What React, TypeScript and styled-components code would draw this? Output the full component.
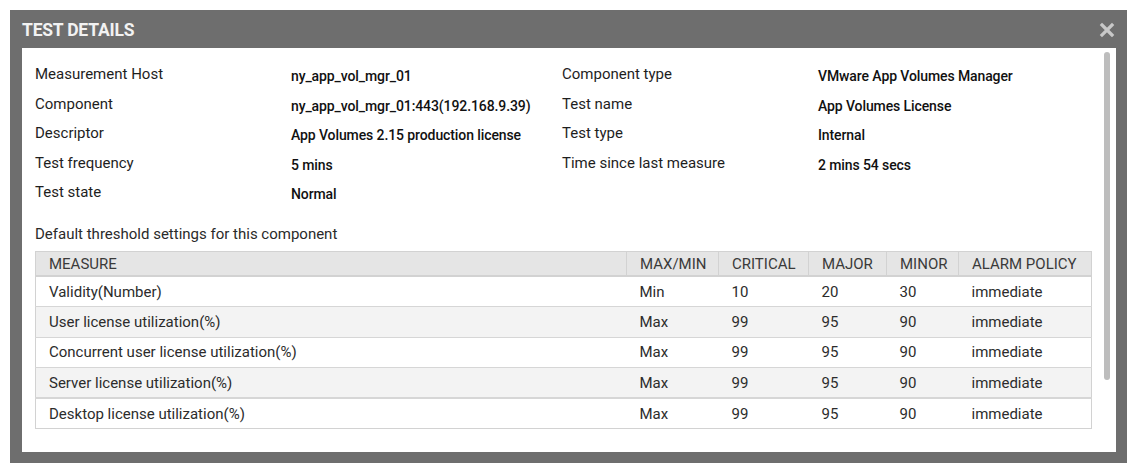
import styled, { createGlobalStyle } from 'styled-components';

const GlobalStyle = createGlobalStyle`
	body {
		margin: 0;
		background: #ffffff;
		font-family: Roboto, 'Liberation Sans', sans-serif;
	}
`;

const details = [
	['Measurement Host', 'ny_app_vol_mgr_01', 'Component type', 'VMware App Volumes Manager'],
	['Component', 'ny_app_vol_mgr_01:443(192.168.9.39)', 'Test name', 'App Volumes License'],
	['Descriptor', 'App Volumes 2.15 production license', 'Test type', 'Internal'],
	['Test frequency', '5 mins', 'Time since last measure', '2 mins 54 secs'],
	['Test state', 'Normal', '', ''],
];

const columns = [
	{ title: 'MEASURE', width: 591 },
	{ title: 'MAX/MIN', width: 92 },
	{ title: 'CRITICAL', width: 90 },
	{ title: 'MAJOR', width: 78 },
	{ title: 'MINOR', width: 72 },
	{ title: 'ALARM POLICY', width: 133 },
];

const rows = [
	['Validity(Number)', 'Min', '10', '20', '30', 'immediate'],
	['User license utilization(%)', 'Max', '99', '95', '90', 'immediate'],
	['Concurrent user license utilization(%)', 'Max', '99', '95', '90', 'immediate'],
	['Server license utilization(%)', 'Max', '99', '95', '90', 'immediate'],
	['Desktop license utilization(%)', 'Max', '99', '95', '90', 'immediate'],
];

function App() {
	return (
		<>
			<GlobalStyle />
			<Dialog>
				<Header>
					<h1>TEST DETAILS</h1>
					<CloseIcon width="16" height="16" viewBox="0 0 16 16">
						<path d="M3 3 L13 13 M13 3 L3 13" stroke="#c8c8c8" strokeWidth="3.2" strokeLinecap="square" />
					</CloseIcon>
				</Header>
				<Panel>
					<Content>
						<InfoGrid>
							{details.map((row, idx) => (
								<InfoRow key={idx}>
									<Label>{row[0]}</Label>
									<Value>{row[1]}</Value>
									<Label>{row[2]}</Label>
									<Value>{row[3]}</Value>
								</InfoRow>
							))}
						</InfoGrid>
						<Caption>Default threshold settings for this component</Caption>
						<Table>
							<thead>
								<tr>
									{columns.map((col) => (
										<Th key={col.title} style={{ width: col.width }}>
											{col.title}
										</Th>
									))}
								</tr>
							</thead>
							<tbody>
								{rows.map((row, idx) => (
									<Tr key={idx} $odd={idx % 2 === 1} $thick={idx === 4}>
										{row.map((cell, cIdx) => (
											<Td key={cIdx}>{cell}</Td>
										))}
									</Tr>
								))}
							</tbody>
						</Table>
					</Content>
					<ScrollTrack>
						<ScrollThumb />
					</ScrollTrack>
				</Panel>
			</Dialog>
		</>
	);
}

const Dialog = styled.div`
	margin: 10px 0 0 10px;
	width: 1117px;
	height: 453px;
	background: #6e6e6e;
	padding: 0 11px 11px 12px;
	box-sizing: border-box;
	display: flex;
	flex-direction: column;
`;

const Header = styled.header`
	height: 38px;
	display: flex;
	align-items: center;
	justify-content: space-between;

	h1 {
		margin: 0;
		padding-top: 1px;
		font-size: 17.5px;
		font-weight: 700;
		color: #f2f2f2;
		letter-spacing: -0.2px;
	}
`;

const CloseIcon = styled.svg`
	margin-right: 1px;
	margin-top: 2px;
`;

const Panel = styled.main`
	flex: 1;
	background: #ffffff;
	display: flex;
`;

const Content = styled.div`
	flex: 1;
	padding: 13px 0 0 13px;
`;

const InfoGrid = styled.div`
	display: flex;
	flex-direction: column;
`;

const InfoRow = styled.div`
	display: grid;
	grid-template-columns: 256px 271px 256px 1fr;
	height: 29.5px;
	align-items: start;
	padding-top: 4px;
	box-sizing: border-box;
	line-height: 18px;
`;

const Label = styled.div`
	font-size: 15px;
	color: #1e1e1e;
`;

const Value = styled.div`
	font-size: 14px;
	font-weight: 500;
	color: #111111;
	padding-top: 2px;
	letter-spacing: -0.1px;
`;

const Caption = styled.div`
	margin-top: 16px;
	font-size: 15px;
	line-height: 18px;
	color: #2a2a2a;
	margin-bottom: 8px;
`;

const Table = styled.table`
	width: 1056px;
	border-collapse: collapse;
	border: 1px solid #d2d2d2;
	table-layout: fixed;
	font-size: 15px;
	color: #2c2c2c;
`;

const Th = styled.th`
	height: 25px;
	padding: 1px 0 0 13px;
	background: #e5e5e5;
	border: 1px solid #d2d2d2;
	border-bottom: 2px solid #d2d2d2;
	text-align: left;
	font-weight: 400;
	color: #3a3a3a;
	box-sizing: border-box;
`;

const Tr = styled.tr<{ $odd: boolean; $thick: boolean }>`
	height: 30.5px;
	background: ${(props) => (props.$odd ? '#f3f3f3' : '#ffffff')};
	border-top: ${(props) => (props.$thick ? '2px' : '1px')} solid #d6d6d6;
`;

const Td = styled.td`
	padding: 0 0 0 13px;
	white-space: nowrap;
`;

const ScrollTrack = styled.div`
	width: 14px;
	padding: 4px 0 0 2px;
	box-sizing: border-box;
`;

const ScrollThumb = styled.div`
	width: 6px;
	height: 328px;
	border-radius: 3px;
	background: #bdbdbd;
`;

export default App;
